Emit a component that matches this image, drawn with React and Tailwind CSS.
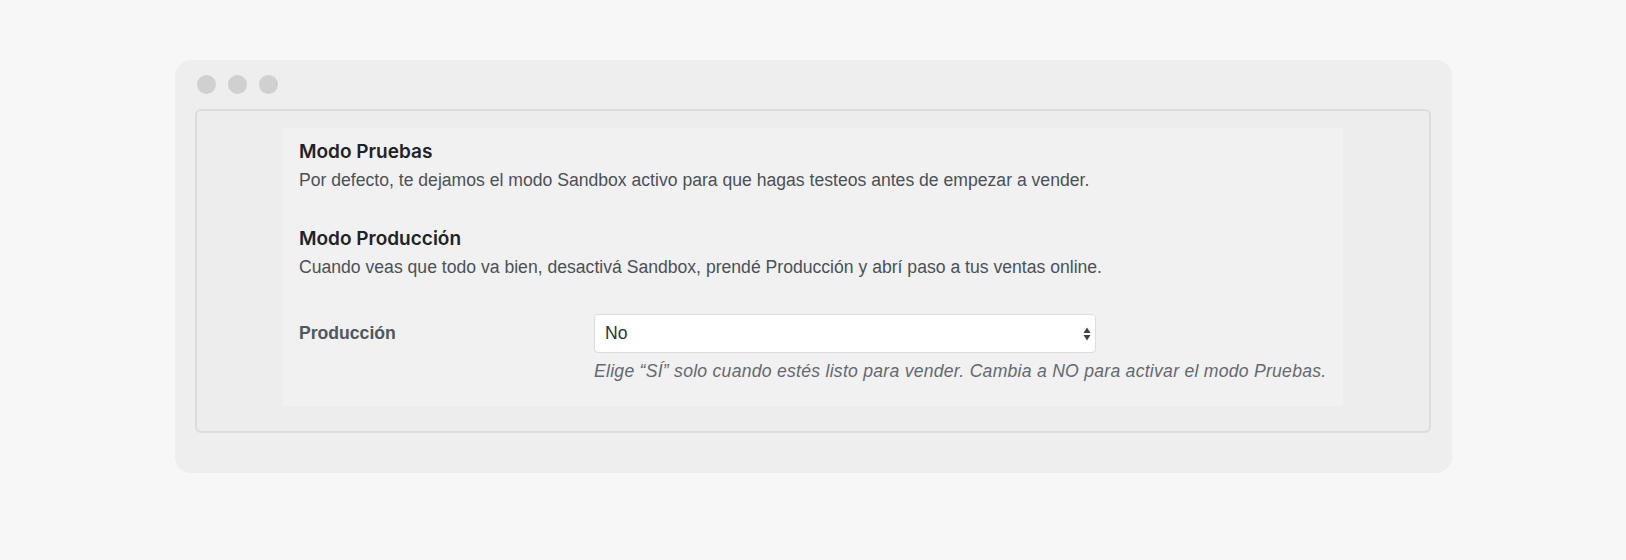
import React from "react";

export default function App() {
  const body = { fontFamily: '"Liberation Sans", Arial, sans-serif' };
  const head = { fontFamily: 'Inter, "Liberation Sans", sans-serif' };
  return (
    <div className="w-[1626px] h-[560px] bg-[#f7f7f7] pt-[60px] pl-[175px]" style={body}>
      <div className="w-[1277px] h-[413px] rounded-[16px] bg-[#eeeeee] pt-[15px] pl-[20px] pr-[21px]">
        <div className="flex gap-[12px] ml-[2px]">
          <span className="w-[19px] h-[19px] rounded-full bg-[#d0d0d0]" />
          <span className="w-[19px] h-[19px] rounded-full bg-[#d0d0d0]" />
          <span className="w-[19px] h-[19px] rounded-full bg-[#d0d0d0]" />
        </div>
        <div className="mt-[15px] h-[324px] border-2 border-[#dadde0] rounded-[6px] bg-[#ededed] pt-[17px]">
          <div className="mx-auto w-[1060px] h-[278px] bg-[#f1f1f1] pl-[16px] pt-[12px]">
            <h2 className="text-[19px] leading-[24px] font-semibold text-[#1d2327]" style={head}>
              Modo Pruebas
            </h2>
            <p className="mt-[6px] text-[17.6px] leading-[21px] text-[#4b5057]">
              Por defecto, te dejamos el modo Sandbox activo para que hagas testeos antes de empezar a vender.
            </p>
            <h2 className="mt-[36px] text-[19px] leading-[24px] font-semibold text-[#1d2327]" style={head}>
              Modo Producción
            </h2>
            <p className="mt-[6px] text-[17.6px] leading-[21px] text-[#4b5057]">
              Cuando veas que todo va bien, desactivá Sandbox, prendé Producción y abrí paso a tus ventas online.
            </p>
            <div className="mt-[36px] flex items-start">
              <div className="w-[295px] pt-[9px] text-[17.6px] leading-[21px] font-bold text-[#50575e]">
                Producción
              </div>
              <div>
                <div className="w-[502px] h-[39px] rounded-[4px] border border-[#dcdcde] bg-white flex items-center justify-between pl-[10px] pr-[3px] text-[17.6px] text-[#2c3338]">
                  <span>No</span>
                  <svg width="10" height="18" viewBox="0 0 10 18">
                    <path d="M5 2.5 L8.5 8 L1.5 8 Z" fill="#3c434a" />
                    <path d="M5 15.5 L8.5 10 L1.5 10 Z" fill="#3c434a" />
                  </svg>
                </div>
                <p className="mt-[8px] text-[17.6px] leading-[21px] italic tracking-[0.26px] text-[#646970]">
                  Elige “SÍ” solo cuando estés listo para vender. Cambia a NO para activar el modo Pruebas.
                </p>
              </div>
            </div>
          </div>
        </div>
      </div>
    </div>
  );
}
